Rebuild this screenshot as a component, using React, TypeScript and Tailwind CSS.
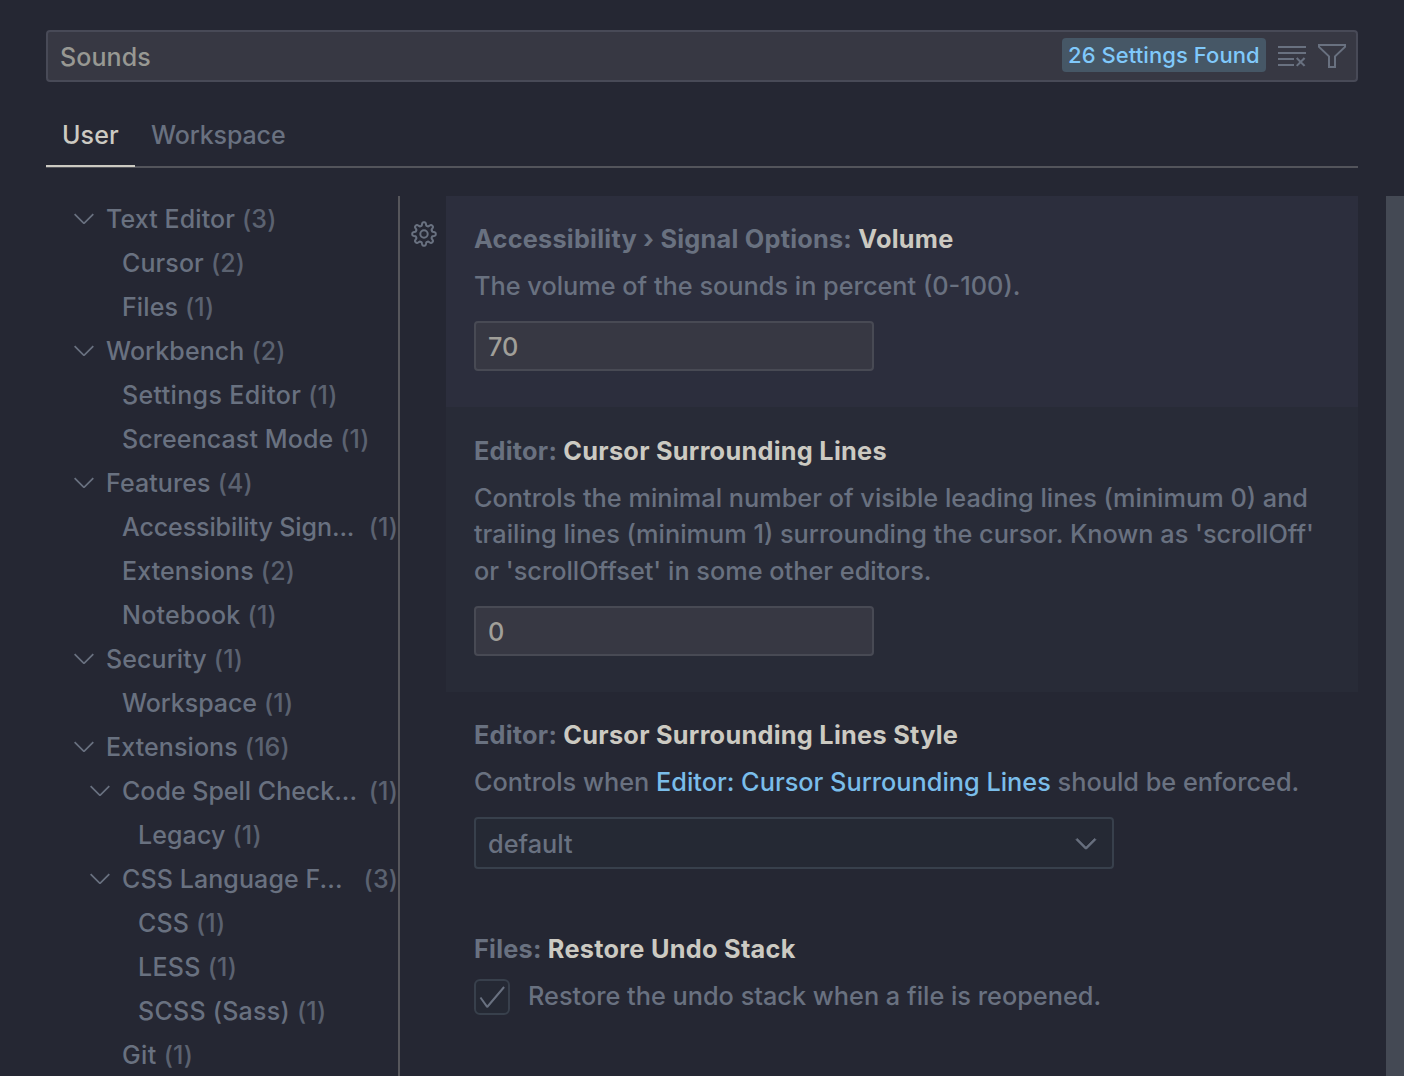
import type { ReactNode } from 'react';
import { VscCheck, VscChevronDown, VscClearAll, VscFilter } from 'react-icons/vsc';

type TocEntry = { label: string; count: number; level: 0 | 1 | 2; group?: boolean; clipped?: boolean; spacing?: string };

const toc: TocEntry[] = [
  { label: 'Text Editor', count: 3, level: 0, group: true },
  { label: 'Cursor', count: 2, level: 1 },
  { label: 'Files', count: 1, level: 1 },
  { label: 'Workbench', count: 2, level: 0, group: true },
  { label: 'Settings Editor', count: 1, level: 1, spacing: 'tracking-[0.35px]' },
  { label: 'Screencast Mode', count: 1, level: 1 },
  { label: 'Features', count: 4, level: 0, group: true },
  { label: 'Accessibility Sign...', count: 1, level: 1, clipped: true, spacing: 'tracking-[-0.1px]' },
  { label: 'Extensions', count: 2, level: 1 },
  { label: 'Notebook', count: 1, level: 1, spacing: 'tracking-[0.25px]' },
  { label: 'Security', count: 1, level: 0, group: true },
  { label: 'Workspace', count: 1, level: 1, spacing: 'tracking-[-0.05px]' },
  { label: 'Extensions', count: 16, level: 0, group: true },
  { label: 'Code Spell Check...', count: 1, level: 1, group: true, clipped: true, spacing: 'tracking-[0px]' },
  { label: 'Legacy', count: 1, level: 2 },
  { label: 'CSS Language F...', count: 3, level: 1, group: true, clipped: true },
  { label: 'CSS', count: 1, level: 2 },
  { label: 'LESS', count: 1, level: 2, spacing: 'tracking-[0.3px]' },
  { label: 'SCSS (Sass)', count: 1, level: 2, spacing: 'tracking-[0.25px]' },
  { label: 'Git', count: 1, level: 1, spacing: 'tracking-[0.4px]' },
];

const indents = ['pl-[22px]', 'pl-[38px]', 'pl-[54px]'];

function TocRow({ entry }: { entry: TocEntry }) {
  return (
    <div className={`flex h-11 shrink-0 items-center whitespace-nowrap ${indents[entry.level]}`}>
      <span className="-mt-[3px] flex w-[38px] shrink-0">
        {entry.group && <VscChevronDown className="size-8" />}
      </span>
      <span className={entry.spacing ?? ''}>{entry.label}</span>
      <span className={`opacity-80 ${entry.clipped ? 'ml-auto' : 'ml-[7px]'}`}>({entry.count})</span>
    </div>
  );
}

function GearIcon() {
  const teeth = 8;
  const points: string[] = [];
  for (let i = 0; i < 128; i++) {
    const a = (i / 128) * Math.PI * 2;
    const wave = Math.tanh(2 * Math.cos(teeth * a)) / Math.tanh(2);
    const r = 10.1 + 1.65 * wave;
    points.push(`${(14 + r * Math.sin(a)).toFixed(2)} ${(14 - r * Math.cos(a)).toFixed(2)}`);
  }
  return (
    <svg viewBox="0 0 28 28" className="size-7" fill="none" stroke="currentColor" strokeWidth="2" strokeLinejoin="round">
      <path d={`M${points.join('L')}Z`} />
      <circle cx="14" cy="14" r="3.7" />
    </svg>
  );
}

function Setting({ category, name, className, children }: { category: string; name: string; className: string; children: ReactNode }) {
  return (
    <section className={`shrink-0 pl-7 text-[25.3px] tracking-[0px] ${className}`}>
      <h2 className="h-[47px] whitespace-nowrap font-[650] leading-9 tracking-[0.23px]">
        {category} <span className="tracking-[0.28px] text-[#cccac2]">{name}</span>
      </h2>
      {children}
    </section>
  );
}

function NumberField({ value, className }: { value: string; className: string }) {
  return (
    <div className={`flex h-[50px] w-[400px] items-center rounded-[4px] border-2 border-[#484a54] bg-[#373843] px-3 text-[#a09f99] ${className}`}>
      {value}
    </div>
  );
}

export default function App() {
  return (
    <div className="flex h-[1076px] w-[1404px] flex-col overflow-hidden bg-[#252733] pt-[30px] font-['Inter',sans-serif] text-[25px] font-[450] leading-9 tracking-[0.1px] text-[#697180]">
      <header className="ml-[46px] w-[1312px] shrink-0">
        <div className="flex h-[52px] items-center rounded-[4px] border-2 border-[#484a57] bg-[#373843] pl-3 pr-2">
          <span className="mt-px text-[#989893]">Sounds</span>
          <span className="-mt-0.5 ml-auto flex h-[34px] w-[204px] items-center whitespace-nowrap rounded-[4px] bg-[#465766] pl-1.5 text-[22px] tracking-[0.08px] text-[#80c9fb]">
            26 Settings Found
          </span>
          <VscClearAll className="ml-[10px] size-8" />
          <VscFilter className="ml-2 size-8" />
        </div>
        <nav className="mt-5 flex h-[66px] border-b-2 border-[#53545b]">
          <span className="-mb-[1px] flex h-[65px] w-[89px] items-center border-b-2 border-[#cccac2] pl-4 pt-[3px] text-[#cccac2]">User</span>
          <span className="ml-4 flex h-[65px] items-center pt-px tracking-[-0.1px]">Workspace</span>
        </nav>
      </header>
      <main className="mt-7 flex min-h-0 flex-1">
        <aside className="ml-[46px] flex w-[354px] shrink-0 flex-col overflow-hidden border-r-2 border-[#56565b] pt-px">
          {toc.map((entry, i) => (
            <TocRow key={i} entry={entry} />
          ))}
        </aside>
        <div className="flex w-[46px] shrink-0 pl-[10px] pt-[23.5px]">
          <GearIcon />
        </div>
        <div className="flex w-[912px] shrink-0 flex-col overflow-hidden">
          <Setting category="Accessibility › Signal Options:" name="Volume" className="h-[211px] bg-[#2c2e3d] pt-[25px]">
            <p>The volume of the sounds in percent (0-100).</p>
            <NumberField value="70" className="mt-[17px] pt-px" />
          </Setting>
          <Setting category="Editor:" name="Cursor Surrounding Lines" className="h-[285px] bg-[#282b37] pt-[26px]">
            <div className="whitespace-nowrap">
              <p className="h-9">Controls the minimal number of visible leading lines (minimum 0) and</p>
              <p className="h-[37px]">trailing lines (minimum 1) surrounding the cursor. Known as 'scrollOff'</p>
              <p className="h-9">or 'scrollOffset' in some other editors.</p>
            </div>
            <NumberField value="0" className="mt-[17px] pt-px" />
          </Setting>
          <Setting category="Editor:" name="Cursor Surrounding Lines Style" className="h-[214px] pt-[25px]">
            <p>
              Controls when <span className="text-[#7abdea]">Editor: Cursor Surrounding Lines</span> should be enforced.
            </p>
            <div className="mt-[17px] flex h-[52px] w-[640px] items-center justify-between rounded-[4px] border-2 border-[#38404c] bg-[#252934] pl-3 pr-[10px]">
              <span className="pt-0.5">default</span>
              <VscChevronDown className="size-8" strokeWidth="0.4" />
            </div>
          </Setting>
          <Setting category="Files:" name="Restore Undo Stack" className="h-[214px] pt-[25px]">
            <div className="flex items-start">
              <span className="mr-[18px] mt-px flex size-9 items-center justify-center rounded-[6px] border-2 border-[#38404c] bg-[#252934]">
                <VscCheck className="size-8 shrink-0" />
              </span>
              <p>Restore the undo stack when a file is reopened.</p>
            </div>
          </Setting>
        </div>
        <div className="ml-7 flex-1 bg-[#444954]" />
      </main>
    </div>
  );
}
